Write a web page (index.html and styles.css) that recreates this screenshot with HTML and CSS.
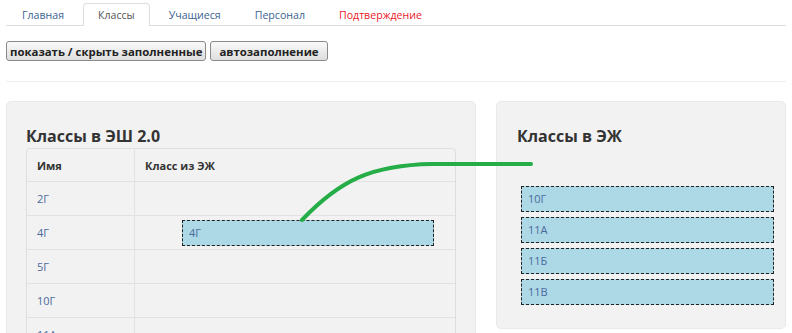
FILE: index.html
```html
<!DOCTYPE html>
<html lang="ru">
<head>
    <meta charset="UTF-8">
    <title>Классы</title>
    <link rel="stylesheet" href="styles.css">
</head>
<body>
    <ul class="tabs">
        <li class="tab">Главная</li>
        <li class="tab active">Классы</li>
        <li class="tab">Учащиеся</li>
        <li class="tab">Персонал</li>
        <li class="tab warn">Подтверждение</li>
    </ul>

    <div class="toolbar">
        <button class="btn">показать / скрыть заполненные</button>
        <button class="btn btn-auto">автозаполнение</button>
    </div>

    <hr class="divider">

    <div class="panels">
        <div class="panel panel-left">
            <h2>Классы в ЭШ 2.0</h2>
            <table class="classes">
                <thead>
                    <tr><th class="col-name">Имя</th><th>Класс из ЭЖ</th></tr>
                </thead>
                <tbody>
                    <tr><td>2Г</td><td></td></tr>
                    <tr><td>4Г</td><td><div class="chip chip-linked">4Г</div></td></tr>
                    <tr><td>5Г</td><td></td></tr>
                    <tr><td>10Г</td><td></td></tr>
                    <tr><td>11А</td><td></td></tr>
                    <tr><td>11Б</td><td></td></tr>
                </tbody>
            </table>
        </div>

        <div class="panel panel-right">
            <h2>Классы в ЭЖ</h2>
            <div class="chip-list">
                <div class="chip">10Г</div>
                <div class="chip">11А</div>
                <div class="chip">11Б</div>
                <div class="chip">11В</div>
            </div>
        </div>
    </div>

    <!-- connector drawn over both panels -->
    <svg class="link" width="792" height="333" viewBox="0 0 792 333">
        <path d="M302 220 C 340 180, 372 165, 432 164 L 531 164" fill="none" stroke="#25ad48" stroke-width="4" stroke-linecap="round"/>
    </svg>
</body>
</html>
```

FILE: styles.css
```css
html, body {
    overflow: hidden;
}
body {
    font-family: "Open Sans", Arial, sans-serif;
    font-size: 11px;
    color: #333;
    background-color: white;
    margin: 0;
    padding: 0 6px;
    position: relative;
}
.tabs {
    list-style: none;
    margin: 0;
    padding: 3px 0 0 1px;
    display: flex;
    border-bottom: 1px solid #ddd;
}
.tab {
    font-size: 10.6px;
    line-height: 22px;
    padding: 0 14px;
    margin-right: 4px;
    margin-bottom: -1px;
    color: #3b5f8f;
    border: 1px solid transparent;
    border-bottom: none;
    border-radius: 4px 4px 0 0;
}
.tab.active {
    color: #555;
    background-color: white;
    border-color: #ddd;
    height: 22px;
}
.tab.warn {
    color: #e8202a;
}
.toolbar {
    display: flex;
    gap: 4px;
    margin-top: 15px;
}
.btn {
    font-family: "Open Sans", Arial, sans-serif;
    font-size: 11.4px;
    font-weight: bold;
    color: #222;
    height: 20px;
    padding: 0 3px;
    background: linear-gradient(#fafafa, #dedede);
    border: 1px solid #8a8a8a;
    border-radius: 3px;
}
.btn-auto {
    padding: 0 8px;
}
.divider {
    border: none;
    border-top: 1px solid #eee;
    margin: 20px 0 19px;
}
.panels {
    display: flex;
    align-items: flex-start;
    gap: 20px;
}
.panel {
    flex: none;
    background-color: #f2f2f2;
    border: 1px solid #e9e9e9;
    border-radius: 5px;
}
.panel h2 {
    font-size: 16px;
    font-weight: bold;
    color: #333;
    margin: 0;
    line-height: 22px;
}
.panel-left {
    width: 430px;
    padding: 23px 19px 40px;
}
.panel-left h2 {
    margin-bottom: 1px;
}
.panel-right {
    width: 257px;
    padding: 23px 11px 23px 20px;
}
.classes {
    width: 100%;
    border-collapse: separate;
    border-spacing: 0;
    border: 1px solid #dedede;
    border-radius: 4px;
}
.classes th, .classes td {
    text-align: left;
    padding: 0 10px;
    border-top: 1px solid #e2e2e2;
    height: 33px;
}
.classes th {
    border-top: none;
    height: 32px;
    font-weight: bold;
    color: #333;
}
.classes td {
    color: #4a6a9c;
}
.classes th + th, .classes td + td {
    border-left: 1px solid #e2e2e2;
}
.col-name {
    width: 87px;
}
.chip {
    background-color: #add8e6;
    border: 1px dashed #222;
    color: #4a6a9c;
    height: 24px;
    line-height: 24px;
    padding: 0 6px;
}
.chip-linked {
    margin: 0 11px 0 37px;
}
.chip-list {
    display: flex;
    flex-direction: column;
    gap: 5px;
    margin-top: 39px;
    padding-left: 4px;
}
.link {
    position: absolute;
    left: 0;
    top: 0;
    pointer-events: none;
}
```
